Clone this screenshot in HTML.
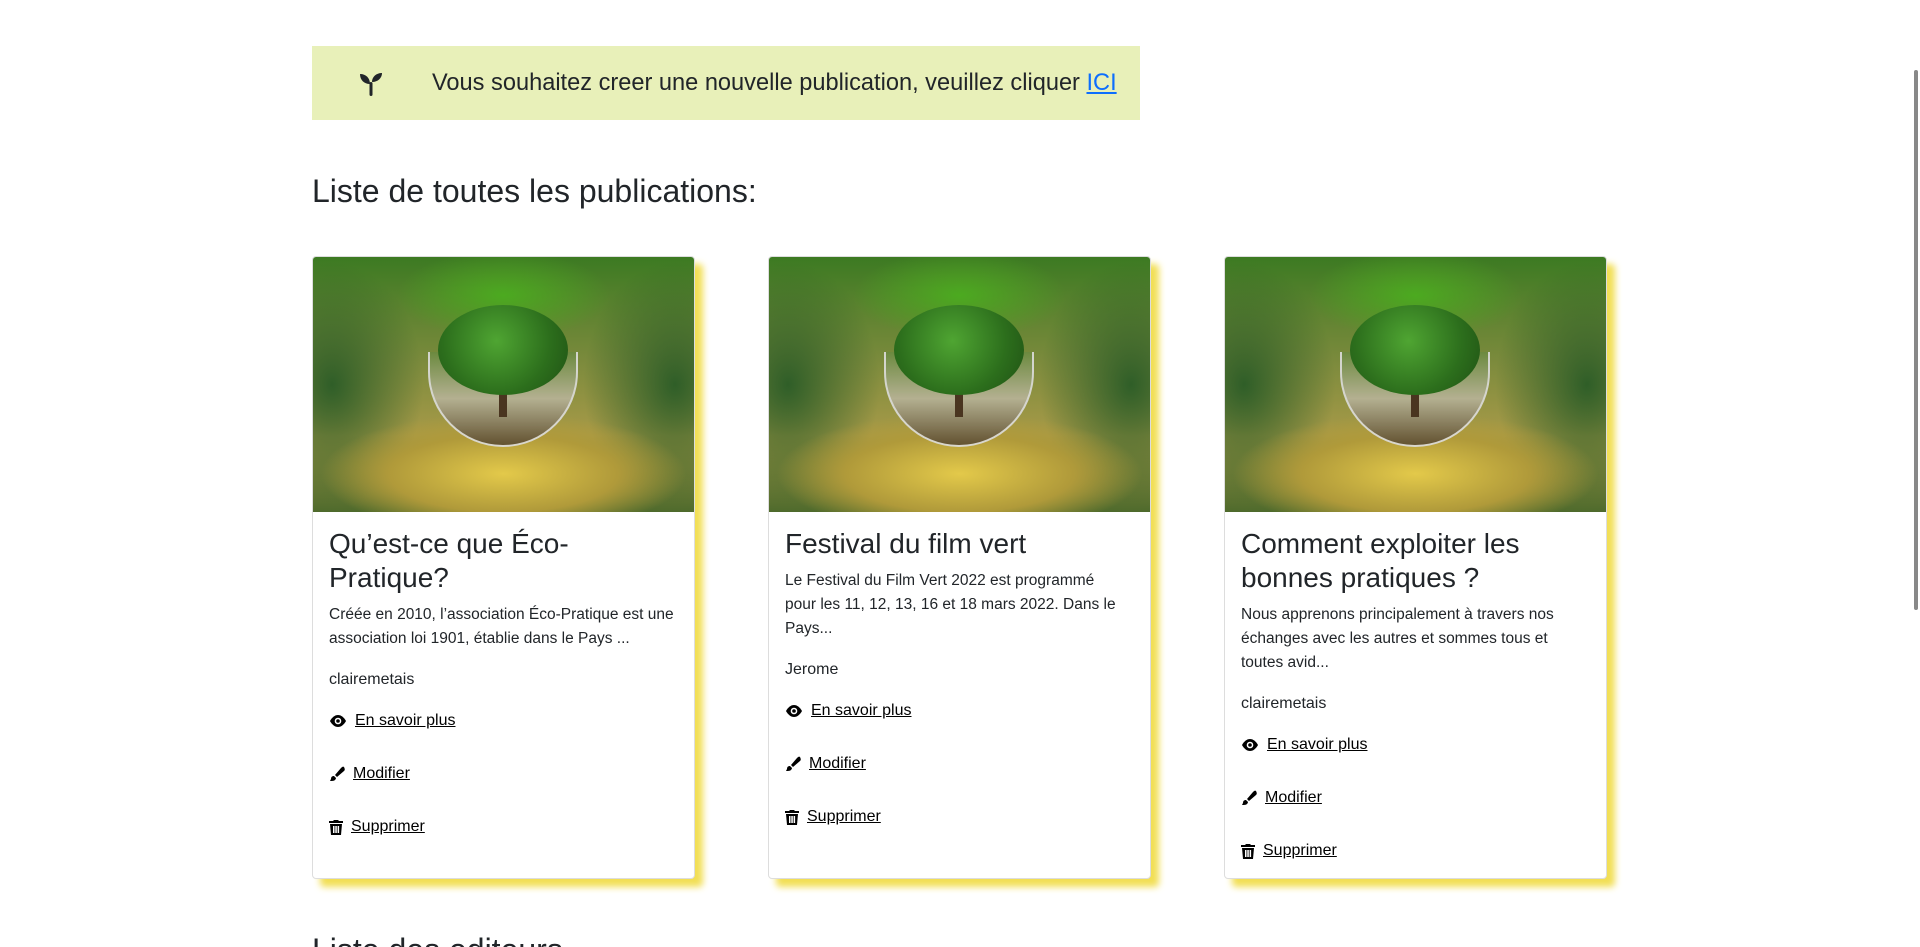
<!DOCTYPE html>
<html style="height:947px;overflow:hidden"><head><meta charset="utf-8"><style>
*{box-sizing:border-box;margin:0;padding:0}
body{width:1920px;height:947px;overflow:hidden;background:#fff;font-family:"Liberation Sans","DejaVu Sans",sans-serif;color:#212529;position:relative}
.banner{position:absolute;left:312px;top:46px;width:828px;height:74px;background:#e8f0b9;display:flex;align-items:center;font-size:23.6px}
.banner svg{margin-left:47px;margin-right:49px}
.banner a{color:#0d6efd}
h2{position:absolute;left:312px;top:173px;font-weight:400;font-size:32px}
.card{position:absolute;top:256px;width:383px;height:623px;border:1px solid #ddd;border-radius:4px;background:#fff;box-shadow:8px 8px 7px #f2df55;overflow:hidden}
.img{height:255px;position:relative;overflow:hidden;background:
radial-gradient(ellipse 60% 30% at 50% 85%,#e3c94a 0%,#b09a3a 50%,transparent 80%),
radial-gradient(ellipse 40% 25% at 50% 15%,#4caa20,transparent 70%),
radial-gradient(ellipse 30% 60% at 5% 50%,#2f5e28,transparent 80%),
radial-gradient(ellipse 30% 60% at 95% 50%,#2f5e28,transparent 80%),
linear-gradient(#3c7a22,#7a8a3c 40%,#a79a48 70%,#4e6a2c)}
.tree{position:absolute;left:125px;top:48px;width:130px;height:90px;border-radius:50%;background:radial-gradient(circle at 45% 40%,#4fa532,#2c6e1c 60%,#1f4f14)}
.globe{position:absolute;left:115px;top:95px;width:150px;height:95px;border-radius:0 0 75px 75px;background:linear-gradient(#6b8a40,#b8b49a 50%,#5a4a30);opacity:.9;border:2px solid #ddd;border-top:none}
.trunk{position:absolute;left:186px;top:120px;width:8px;height:40px;background:#4a3520}
.body{padding:15px 16px}
.t{font-size:28px;line-height:34px;margin-bottom:8px}
.d{font-size:15.5px;line-height:24px}
.au{font-size:16px;margin-top:20px}
.l{font-size:16px;margin-top:15px;display:flex;align-items:center;height:33px}
.l+.l{margin-top:20px}
.l a{color:#000;text-decoration:underline}
.l svg{margin-right:8px}
.sb{position:absolute;right:2px;top:70px;width:4px;height:540px;background:#888;border-radius:2px}
.wrap{position:absolute;left:0;top:0;width:1920px;height:947px;overflow:hidden}
.bottom{position:absolute;left:312px;top:930px;font-size:32px;line-height:40px}
</style></head><body><div class="wrap">
<div class="banner"><svg width="24" height="26" viewBox="0 0 24 26"><path d="M11 26V14C11 8 7 4 1 4c0 6 4 10 10 10M13 12c0-5 4-9 10-9 0 5-4 9-10 9" fill="#212529"/><rect x="10.5" y="12" width="3" height="14" rx="1.5" fill="#212529"/></svg><span>Vous souhaitez creer une nouvelle publication, veuillez cliquer <a href="#">ICI</a></span></div>
<h2>Liste de toutes les publications:</h2>

<div class="card" style="left:312px"><div class="img"><div class="globe"></div><div class="trunk"></div><div class="tree"></div></div>
<div class="body"><div class="t">Qu’est-ce que Éco-<br>Pratique?</div><div class="d">Créée en 2010, l’association Éco-Pratique est une association loi 1901, établie dans le Pays ...</div><div class="au">clairemetais</div>
<div class="l"><svg width="18" height="14" viewBox="0 0 18 14"><path d="M9 1C4 1 1 7 1 7s3 6 8 6 8-6 8-6-3-6-8-6z" fill="#000"/><circle cx="9" cy="7" r="3.3" fill="#fff"/><circle cx="9" cy="7" r="1.8" fill="#000"/></svg><a href="#">En savoir plus</a></div>
<div class="l"><svg width="16" height="16" viewBox="0 0 16 16"><path d="M15 1c-1-1-2 0-3 1L6 9l2 2 7-6c1-1 1-2 0-4zM5 10c-2 0-3 1-3 3l-1 2c2 0 4 0 5-1s1-2 1-2z" fill="#000"/></svg><a href="#">Modifier</a></div>
<div class="l"><svg width="14" height="16" viewBox="0 0 14 16"><path d="M0 2h4l1-1h4l1 1h4v2H0zM1 5h12l-1 11H2zM4 7v7h1.5V7zm2.3 0v7h1.5V7zm2.3 0v7h1.5V7z" fill="#000" fill-rule="evenodd"/></svg><a href="#">Supprimer</a></div></div></div>

<div class="card" style="left:768px"><div class="img"><div class="globe"></div><div class="trunk"></div><div class="tree"></div></div>
<div class="body"><div class="t">Festival du film vert</div><div class="d">Le Festival du Film Vert 2022 est programmé<br>pour les 11, 12, 13, 16 et 18 mars 2022. Dans le<br>Pays...</div><div class="au">Jerome</div>
<div class="l"><svg width="18" height="14" viewBox="0 0 18 14"><path d="M9 1C4 1 1 7 1 7s3 6 8 6 8-6 8-6-3-6-8-6z" fill="#000"/><circle cx="9" cy="7" r="3.3" fill="#fff"/><circle cx="9" cy="7" r="1.8" fill="#000"/></svg><a href="#">En savoir plus</a></div>
<div class="l"><svg width="16" height="16" viewBox="0 0 16 16"><path d="M15 1c-1-1-2 0-3 1L6 9l2 2 7-6c1-1 1-2 0-4zM5 10c-2 0-3 1-3 3l-1 2c2 0 4 0 5-1s1-2 1-2z" fill="#000"/></svg><a href="#">Modifier</a></div>
<div class="l"><svg width="14" height="16" viewBox="0 0 14 16"><path d="M0 2h4l1-1h4l1 1h4v2H0zM1 5h12l-1 11H2zM4 7v7h1.5V7zm2.3 0v7h1.5V7zm2.3 0v7h1.5V7z" fill="#000" fill-rule="evenodd"/></svg><a href="#">Supprimer</a></div></div></div>

<div class="card" style="left:1224px"><div class="img"><div class="globe"></div><div class="trunk"></div><div class="tree"></div></div>
<div class="body"><div class="t">Comment exploiter les bonnes pratiques ?</div><div class="d">Nous apprenons principalement à travers nos échanges avec les autres et sommes tous et toutes avid...</div><div class="au">clairemetais</div>
<div class="l"><svg width="18" height="14" viewBox="0 0 18 14"><path d="M9 1C4 1 1 7 1 7s3 6 8 6 8-6 8-6-3-6-8-6z" fill="#000"/><circle cx="9" cy="7" r="3.3" fill="#fff"/><circle cx="9" cy="7" r="1.8" fill="#000"/></svg><a href="#">En savoir plus</a></div>
<div class="l"><svg width="16" height="16" viewBox="0 0 16 16"><path d="M15 1c-1-1-2 0-3 1L6 9l2 2 7-6c1-1 1-2 0-4zM5 10c-2 0-3 1-3 3l-1 2c2 0 4 0 5-1s1-2 1-2z" fill="#000"/></svg><a href="#">Modifier</a></div>
<div class="l"><svg width="14" height="16" viewBox="0 0 14 16"><path d="M0 2h4l1-1h4l1 1h4v2H0zM1 5h12l-1 11H2zM4 7v7h1.5V7zm2.3 0v7h1.5V7zm2.3 0v7h1.5V7z" fill="#000" fill-rule="evenodd"/></svg><a href="#">Supprimer</a></div></div></div>

<div class="bottom">Liste des editeurs</div>
<div class="sb"></div>
</div></body></html>
